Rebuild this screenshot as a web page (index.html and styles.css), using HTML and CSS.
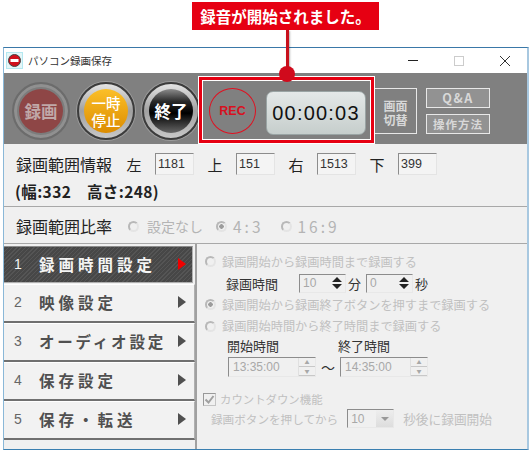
FILE: index.html
```html
<!DOCTYPE html>
<html lang="ja">
<head>
    <meta charset="UTF-8">
    <meta name="viewport" content="width=device-width, initial-scale=1.0">
    <title>パソコン録画保存</title>
    <link rel="stylesheet" href="styles.css">
</head>
<body>
    <div class="page">
        <div class="callout">録音が開始されました。</div>
        <div class="callout-line"></div>
        <div class="callout-dot"></div>

        <div class="window">
            <div class="titlebar">
                <svg class="app-icon" width="17" height="17" viewBox="0 0 17 17">
                    <rect x="0.5" y="0.5" width="16" height="16" fill="#e4f6f8" stroke="#b4e8f0"/>
                    <circle cx="8.5" cy="8.5" r="6" fill="#d0101c" stroke="#444"/>
                    <rect x="4.5" y="7" width="8" height="3" fill="#fff"/>
                </svg>
                <span class="app-title">パソコン録画保存</span>
                <div class="win-buttons">
                    <svg width="12" height="12" viewBox="0 0 12 12"><path d="M1 5.5h10" stroke="#222" stroke-width="1"/></svg>
                    <svg width="12" height="12" viewBox="0 0 12 12"><rect x="1.5" y="1.5" width="9" height="9" fill="none" stroke="#ccc"/></svg>
                    <svg width="12" height="12" viewBox="0 0 12 12"><path d="M1 1l10 10M11 1L1 11" stroke="#333" stroke-width="1"/></svg>
                </div>
            </div>

            <div class="toolbar">
                <div class="round-btn rec-off"><span>録画</span></div>
                <div class="round-btn pause"><span>一時<br>停止</span></div>
                <div class="round-btn stop"><span>終了</span></div>
                <div class="rec-panel">
                    <div class="rec-mark">REC</div>
                    <div class="timer">00:00:03</div>
                </div>
                <div class="switch-btn">画面<br>切替</div>
                <div class="help-btns">
                    <div class="help-btn qa">Q&amp;A</div>
                    <div class="help-btn">操作方法</div>
                </div>
            </div>

            <div class="info">
                <div class="info-row">
                    <span class="info-label">録画範囲情報</span>
                    <span class="side">左</span><span class="field">1181</span>
                    <span class="side">上</span><span class="field">151</span>
                    <span class="side">右</span><span class="field">1513</span>
                    <span class="side">下</span><span class="field">399</span>
                </div>
                <div class="size-row">(幅:332&nbsp;&nbsp;&nbsp;&nbsp;高さ:248)</div>
            </div>

            <div class="ratio-row">
                <span class="info-label">録画範囲比率</span>
                <span class="radio"></span><span class="ratio-opt">設定なし</span>
                <span class="radio on"></span><span class="ratio-opt num">4:3</span>
                <span class="radio"></span><span class="ratio-opt num">16:9</span>
            </div>

            <div class="main">
                <ul class="menu">
                    <li class="active"><b>1</b><span>録画時間設定</span><i></i></li>
                    <li><b>2</b><span>映像設定</span><i></i></li>
                    <li><b>3</b><span class="tight">オーディオ設定</span><i></i></li>
                    <li><b>4</b><span>保存設定</span><i></i></li>
                    <li><b>5</b><span>保存・転送</span><i></i></li>
                </ul>

                <div class="settings">
                    <div class="opt"><span class="radio"></span>録画開始から録画時間まで録画する</div>
                    <div class="duration">
                        <span class="dark duration-label">録画時間</span>
                        <span class="spin"><em>10</em><svg width="12" height="14" viewBox="0 0 12 14"><path d="M1 6l5-5 5 5zM1 8l5 5 5-5z" fill="#222"/></svg></span>
                        <span class="dark">分</span>
                        <span class="spin second"><em>0</em><svg width="12" height="14" viewBox="0 0 12 14"><path d="M1 6l5-5 5 5zM1 8l5 5 5-5z" fill="#222"/></svg></span>
                        <span class="dark">秒</span>
                    </div>
                    <div class="opt"><span class="radio on"></span>録画開始から録画終了ボタンを押すまで録画する</div>
                    <div class="opt"><span class="radio"></span>録画開始時間から終了時間まで録画する</div>
                    <div class="time-heads">
                        <span class="dark">開始時間</span>
                        <span class="dark">終了時間</span>
                    </div>
                    <div class="times">
                        <span class="time"><em>13:35:00</em><span class="time-arrows"><u>▲</u><u>▼</u></span></span>
                        <span class="tilde">～</span>
                        <span class="time"><em>14:35:00</em><span class="time-arrows"><u>▲</u><u>▼</u></span></span>
                    </div>
                    <div class="count-row">
                        <span class="check">
                            <svg width="13" height="13" viewBox="0 0 13 13"><path d="M2.5 6.5l3 3 5-6.5" fill="none" stroke="#a0a0a0" stroke-width="2"/></svg>
                        </span>カウントダウン機能
                    </div>
                    <div class="delay-row">
                        <span>録画ボタンを押してから</span>
                        <span class="combo"><em>10</em><span class="combo-arrow"></span></span>
                        <span class="delay-end">秒後に録画開始</span>
                    </div>
                </div>
            </div>
        </div>

        <div class="highlight"></div>
    </div>
</body>
</html>
```

FILE: styles.css
```css
* {
    box-sizing: border-box;
}
body {
    margin: 0;
    background: #fff;
    font-family: "Noto Sans CJK JP", "Liberation Sans", sans-serif;
}
.page {
    position: relative;
    width: 531px;
    height: 451px;
    overflow: hidden;
    padding-top: 2px;
}
.callout {
    width: 187px;
    height: 28px;
    margin-left: 192px;
    background: #e60012;
    color: #fff;
    font-size: 15.5px;
    font-weight: 700;
    line-height: 28px;
    text-align: center;
    white-space: nowrap;
}
.callout-line {
    position: absolute;
    left: 286px;
    top: 30px;
    width: 3px;
    height: 42px;
    background: #c8101c;
    box-shadow: 1px 1px 2px rgba(0, 0, 0, 0.3);
}
.callout-dot {
    position: absolute;
    left: 279px;
    top: 66px;
    width: 16px;
    height: 16px;
    border-radius: 50%;
    background: #d00a1c;
    z-index: 3;
}
.highlight {
    position: absolute;
    left: 199px;
    top: 77px;
    width: 175px;
    height: 66px;
    border: 3px solid #e60012;
    box-shadow: inset 0 0 0 1px #fff, 0 0 0 1px #fff;
    z-index: 2;
}
.window {
    width: 526px;
    height: 403px;
    margin: 17px 0 0 3px;
    border: 1px solid #3a7fb0;
    border-left: 1px solid #8ab8d8;
    border-right: 2px solid #a8c8e0;
    border-top-color: #3a78a8;
    background: #f0f0f0;
}
.titlebar {
    display: flex;
    align-items: center;
    height: 25px;
    padding-left: 2px;
    background: #fff;
}
.app-title {
    margin-left: 5px;
    font-size: 10.5px;
    color: #333;
}
.win-buttons {
    display: flex;
    gap: 34px;
    margin-left: auto;
    margin-right: 16px;
}
.toolbar {
    display: flex;
    align-items: center;
    height: 71px;
    padding: 5px 0 0 8px;
    background: #808080;
}
.round-btn {
    display: flex;
    align-items: center;
    justify-content: center;
    flex: none;
    width: 58px;
    height: 58px;
    margin-right: 7px;
    border-radius: 50%;
    background: linear-gradient(#e4e4e4, #a0a0a0 50%, #c8c8c8);
    border: 2px solid #3c3c3c;
    box-shadow: 0 0 0 1px #9c9c9c;
    color: #fff;
    font-size: 16.5px;
    font-weight: 700;
    line-height: 17px;
    text-align: center;
}
.round-btn span {
    display: flex;
    align-items: center;
    justify-content: center;
    width: 44px;
    height: 44px;
    border-radius: 50%;
}
.round-btn.rec-off {
    background: #7c7c7c;
    border: 2px solid #6c6c6c;
    box-shadow: inset 0 0 0 3px #909090;
}
.rec-off span {
    background: #8e4646;
    color: #c0a8a8;
}
.pause span {
    background: linear-gradient(#fbbf28, #dc8c00);
    font-size: 14.5px;
    font-weight: 500;
}
.stop span {
    background: linear-gradient(#8c8c8c 0, #2a2a2a 28%, #000 55%, #666 100%);
}
.rec-panel {
    display: flex;
    align-items: center;
    flex: none;
    width: 176px;
    height: 66px;
    margin-left: -9px;
    padding-left: 11px;
}
.rec-mark {
    flex: none;
    width: 47px;
    height: 46px;
    border: 1px solid #e01020;
    border-radius: 50%;
    color: #d81020;
    font-family: "Liberation Sans", sans-serif;
    font-size: 12.5px;
    font-weight: 700;
    line-height: 44px;
    text-align: center;
}
.timer {
    flex: none;
    width: 100px;
    height: 44px;
    margin: 4px 0 0 10px;
    border-radius: 7px;
    background: linear-gradient(#e4e8e8, #c6cecc);
    border: 1px solid #9aa4a4;
    color: #111;
    font-family: "Liberation Sans", sans-serif;
    font-size: 20px;
    line-height: 42px;
    text-align: center;
    letter-spacing: 1.2px;
    white-space: nowrap;
}
.switch-btn {
    flex: none;
    width: 43px;
    height: 46px;
    padding-top: 10px;
    border: 1px solid #e8e8e8;
    color: #d8d8d8;
    font-size: 12px;
    font-weight: 700;
    line-height: 13.5px;
    text-align: center;
}
.help-btns {
    display: flex;
    flex-direction: column;
    gap: 6px;
    margin-left: 9px;
}
.help-btn {
    width: 64px;
    height: 20px;
    border: 1px solid #e8e8e8;
    background: #929292;
    color: #d8d8d8;
    font-size: 11.5px;
    font-weight: 700;
    line-height: 18px;
    text-align: center;
    letter-spacing: 1px;
}
.help-btn.qa {
    font-size: 12.5px;
    letter-spacing: 1.5px;
}
.info {
    height: 63px;
    padding: 9px 0 0 12px;
    border-bottom: 1px solid #a8a8a8;
}
.info-row {
    display: flex;
    align-items: center;
    height: 22px;
}
.info-label {
    width: 96px;
    font-size: 16px;
    color: #222;
    white-space: nowrap;
}
.side {
    width: 16px;
    font-size: 15px;
    color: #222;
    text-align: center;
}
.info-label + .side {
    margin-left: 14px;
}
.field {
    width: 39px;
    height: 22px;
    margin-left: 13px;
    margin-right: 13px;
    padding-left: 2px;
    background: #f4f4f4;
    border: 1px solid #e4e4e4;
    border-top-color: #8c8c8c;
    border-left-color: #8c8c8c;
    font-family: "Liberation Sans", sans-serif;
    font-size: 12.5px;
    line-height: 20px;
    color: #333;
}
.size-row {
    margin: 6px 0 0 -1px;
    font-size: 15.5px;
    font-weight: 700;
    line-height: 20px;
    letter-spacing: 0.4px;
    color: #222;
}
.ratio-row {
    display: flex;
    align-items: center;
    height: 37px;
    padding: 2px 0 0 12px;
    border-bottom: 1px solid #a8a8a8;
}
.ratio-row .radio {
    margin-left: 8px;
}
.ratio-row .info-label {
    margin-right: 8px;
}
.ratio-opt {
    margin-left: 8px;
    margin-right: 5px;
    color: #b4b4b4;
    font-size: 14px;
}
.ratio-opt.num {
    margin-left: 6px;
    margin-right: 9px;
    font-size: 15.5px;
    letter-spacing: 3px;
}
.radio {
    display: inline-block;
    flex: none;
    width: 11px;
    height: 11px;
    border-radius: 50%;
    border: 2px solid #b8b8b8;
    border-right-color: #e4e4e4;
    border-bottom-color: #e4e4e4;
    background: #f0f0f0;
}
.radio.on {
    background: radial-gradient(circle, #9c9c9c 0 2px, #f0f0f0 2.5px);
}
.main {
    display: flex;
}
.menu {
    flex: none;
    width: 191px;
    margin: 0;
    padding: 2px 0 0;
    list-style-type: none;
}
.menu li {
    display: flex;
    align-items: center;
    width: 191px;
    height: 39px;
    padding: 0 0 2px 10px;
    background: #f2f2f2;
    border-bottom: 2px solid #707070;
    border-top: 1px solid #fff;
    border-right: 1px solid #b0b0b0;
    color: #505050;
    font-size: 15.5px;
    font-weight: 700;
}
.menu b {
    width: 25px;
    color: #666;
    font-family: "Liberation Sans", sans-serif;
    font-size: 14px;
    font-weight: 400;
}
.menu li span {
    width: 136px;
    letter-spacing: 4px;
    white-space: nowrap;
}
.menu li span.tight {
    letter-spacing: 2.8px;
}
.menu i {
    width: 0;
    height: 0;
    margin-left: 3px;
    border-left: 8px solid #505050;
    border-top: 6px solid transparent;
    border-bottom: 6px solid transparent;
}
.menu li.active {
    width: 189px;
    height: 37px;
    margin-bottom: 1px;
    background: #4c4c4c repeating-linear-gradient(135deg, #555 0 1px, #474747 1px 3px);
    border-bottom: 1px solid #b0b0b0;
    border-top: 1px solid #8c8c8c;
    color: #f4f4f4;
}
.menu li.active b {
    color: #f4f4f4;
}
.menu li.active i {
    border-left-color: #f00000;
}
.settings {
    flex: 1;
    height: 205px;
    padding: 7px 0 0 8px;
    border-left: 2px solid #a0a0a0;
    color: #c0c0c0;
    font-size: 12.2px;
}
.opt {
    display: flex;
    align-items: center;
    gap: 6px;
    height: 21.5px;
    white-space: nowrap;
}
.dark {
    color: #333;
    font-size: 13px;
}
.duration {
    display: flex;
    align-items: center;
    gap: 2px;
    height: 21.5px;
    padding-left: 21px;
}
.duration-label {
    width: 71px;
}
.spin {
    display: flex;
    align-items: center;
    justify-content: space-between;
    width: 47px;
    height: 19px;
    padding: 0 2px 0 3px;
    border: 1px solid #e8e8e8;
    border-top-color: #8c8c8c;
    border-left-color: #8c8c8c;
}
.spin.second {
    margin-left: 3px;
}
.spin em, .time em, .combo em {
    font-family: "Liberation Sans", sans-serif;
    font-size: 12px;
    font-style: normal;
    color: #a8a8a8;
}
.time-heads {
    display: flex;
    gap: 59px;
    height: 17px;
    padding-left: 22px;
    line-height: 17px;
}
.times {
    display: flex;
    align-items: center;
    gap: 5px;
    height: 22px;
    margin-top: 2px;
    padding-left: 23px;
}
.time {
    display: flex;
    align-items: center;
    justify-content: space-between;
    width: 88px;
    height: 20px;
    padding-left: 4px;
    border: 1px solid #e8e8e8;
    border-top-color: #8c8c8c;
    border-left-color: #8c8c8c;
}
.time-arrows {
    display: flex;
    flex-direction: column;
    width: 17px;
    height: 18px;
    border-left: 1px solid #e0e0e0;
}
.time-arrows u {
    height: 9px;
    border-bottom: 1px solid #c8c8c8;
    color: #a8a8a8;
    font-size: 5px;
    line-height: 8px;
    text-align: center;
    text-decoration: none;
}
.tilde {
    width: 14px;
    color: #333;
    font-size: 14px;
}
.count-row {
    display: flex;
    align-items: center;
    gap: 4px;
    height: 20px;
    margin: 11px 0 0 -2px;
    font-size: 11.4px;
}
.check {
    display: block;
    width: 13px;
    height: 13px;
    border: 1px solid #c4c4c4;
    border-top-color: #999;
    border-left-color: #999;
}
.check svg {
    display: block;
    margin: -1px;
}
.delay-row {
    display: flex;
    align-items: center;
    gap: 9px;
    height: 19px;
    padding-left: 6px;
    font-size: 11.6px;
    white-space: nowrap;
}
.delay-end {
    font-size: 12.7px;
}
.combo {
    display: flex;
    align-items: center;
    justify-content: space-between;
    width: 47px;
    height: 19px;
    padding-left: 3px;
    border: 1px solid #e8e8e8;
    border-top-color: #8c8c8c;
    border-left-color: #8c8c8c;
}
.combo-arrow {
    position: relative;
    width: 17px;
    height: 17px;
    background: linear-gradient(#eee, #ddd);
}
.combo-arrow::after {
    content: "";
    position: absolute;
    left: 5px;
    top: 7px;
    border-top: 4px solid #999;
    border-left: 4px solid transparent;
    border-right: 4px solid transparent;
}
```
